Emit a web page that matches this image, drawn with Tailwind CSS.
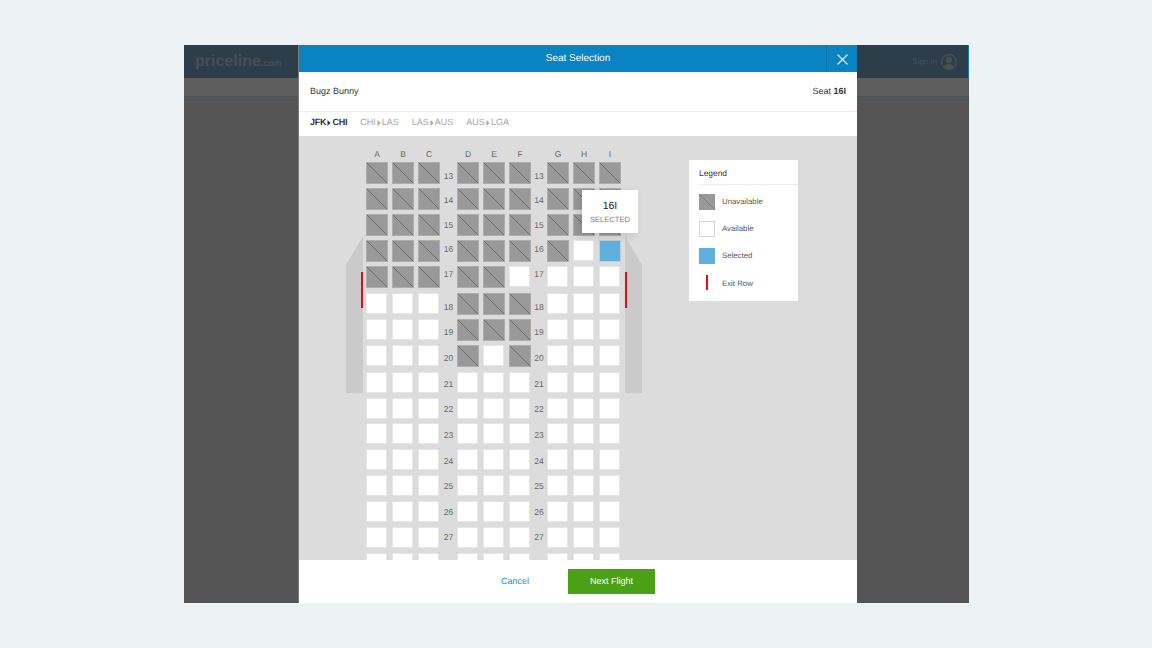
<!DOCTYPE html>
<html lang="en">

<head>
    <meta charset="UTF-8">
    <meta name="viewport" content="width=device-width, initial-scale=1.0">
    <title>Seat Selection</title>
    <script src="https://cdn.jsdelivr.net/npm/@tailwindcss/browser@4"></script>
</head>

<body class="bg-[#edf2f5] font-['Liberation_Sans',Arial,sans-serif] [text-rendering:geometricPrecision] overflow-hidden">
    <div class="w-[1152px] h-[648px] pt-[45px] pl-[184px]">
        <!-- page behind the overlay -->
        <div class="relative w-[785px] h-[558px] bg-[#555555] flex flex-col">
            <div class="h-[33px] bg-[#2d3e4a] border-r border-[#0a83c3] flex justify-between items-center pl-[11px] pr-[11px]">
                <div class="text-[#484e53] font-bold text-[16px]">priceline<span class="text-[9px]">.com</span></div>
                <div class="flex items-center gap-[4px] text-[#44525c] text-[8px]">
                    <span>Sign In</span>
                    <svg class="w-[16px] h-[16px]" viewBox="0 0 16 16">
                        <circle cx="8" cy="8" r="7.4" fill="none" stroke="#4a565f" />
                        <circle cx="8" cy="6" r="3.2" fill="#4a4f53" />
                        <path d="M3 13.5c.5-3 3-3.5 5-3.5s4.500.5 5 3.500a7 7 0 0 1-10 0z" fill="#4a4f53" />
                    </svg>
                </div>
            </div>
            <div class="h-[19px] bg-[#5e5e5e] border-b border-[#43525b]"></div>

            <!-- modal -->
            <div class="absolute left-[114px] top-0 w-[559px] h-[558px] bg-white flex flex-col border-l border-[#7a7a7a]">
                <div class="h-[27px] shrink-0 bg-[#0a83c3] relative flex items-center justify-center text-white text-[10px]">
                    Seat Selection
                    <div class="absolute right-0 top-0 w-[31px] h-[27px] border-l border-[#0875ae] flex items-center justify-center">
                        <svg class="w-[11px] h-[11px] mt-[1px]" viewBox="0 0 11 11">
                            <path d="M.6.6l9.800 9.800M10.400.6L.6 10.400" stroke="#fff" stroke-width="1.300" fill="none" />
                        </svg>
                    </div>
                </div>
                <div class="h-[40px] shrink-0 border-b border-[#eeeeee] flex justify-between items-center pl-[11px] pr-[11px] text-[9px] text-[#333333]">
                    <span>Bugz Bunny</span>
                    <span>Seat <b>16I</b></span>
                </div>
                <div class="h-[24px] shrink-0 flex items-center gap-[13px] pl-[11px] pb-[3px] text-[9px] text-[#a5a5a5]">
                    <span class="flex items-center font-bold text-[#333333] tracking-[-0.2px]">JFK<svg class="w-[4px] h-[6px] mx-[1px]" viewBox="0 0 4 6"><path d="M.5 0l3 3-3 3z" fill="#333" /></svg>CHI</span>
                    <span class="flex items-center">CHI<svg class="w-[4px] h-[6px] mx-[1px]" viewBox="0 0 4 6"><path d="M.5 0l3 3-3 3z" fill="#a5a5a5" /></svg>LAS</span>
                    <span class="flex items-center">LAS<svg class="w-[4px] h-[6px] mx-[1px]" viewBox="0 0 4 6"><path d="M.5 0l3 3-3 3z" fill="#a5a5a5" /></svg>AUS</span>
                    <span class="flex items-center">AUS<svg class="w-[4px] h-[6px] mx-[1px]" viewBox="0 0 4 6"><path d="M.5 0l3 3-3 3z" fill="#a5a5a5" /></svg>LGA</span>
                </div>

                <!-- seat area -->
                <div class="relative h-[424px] shrink-0 bg-[#dcdcdc] overflow-hidden flex items-start pl-[67px] pt-[13px]">
                    <svg class="absolute left-[47px] top-[100px] w-[18px] h-[157px]" viewBox="0 0 18 157">
                        <path d="M0 29L17 0v157H0z" fill="#cacaca" />
                    </svg>
                    <svg class="absolute left-[325px] top-[100px] w-[18px] h-[157px]" viewBox="0 0 18 157">
                        <path d="M18 29L1 0v157h17z" fill="#cacaca" />
                    </svg>
                    <div class="absolute left-[62px] top-[136px] w-[2px] h-[36px] bg-[#dd1010]"></div>
                    <div class="absolute left-[326px] top-[136px] w-[2px] h-[36px] bg-[#dd1010]"></div>

                    <div id="seatMap" class="relative flex flex-col w-[256px]">
                        <div class="flex h-[13px] text-[8.500px] leading-[11px] text-[#666666] text-center">
                            <span class="w-[22px] mr-[4px]">A</span><span class="w-[22px] mr-[4px]">B</span><span class="w-[22px]">C</span>
                            <span class="w-[17px]"></span>
                            <span class="w-[22px] mr-[4px]">D</span><span class="w-[22px] mr-[4px]">E</span><span class="w-[22px]">F</span>
                            <span class="w-[16px]"></span>
                            <span class="w-[22px] mr-[4px]">G</span><span class="w-[22px] mr-[4px]">H</span><span class="w-[22px]">I</span>
                        </div>
                    </div>

                    <div class="absolute left-[283px] top-[54px] w-[56px] h-[43px] bg-white shadow-[-3px_3px_8px_rgba(0,0,0,0.12)] flex flex-col items-center justify-center text-center">
                        <span class="text-[10.500px] leading-[14px] mt-[1px] text-[#222222]">16I</span>
                        <span class="text-[7.600px] leading-[12px] mt-[1px] text-[#777777]">SELECTED</span>
                    </div>

                    <div class="absolute left-[390px] top-[24px] w-[109px] h-[141px] bg-white text-[7.800px] text-[#555555] flex flex-col">
                        <div class="h-[25px] ml-[10px] pt-[3px] border-b border-[#eeeeee] flex items-center text-[8.400px] text-[#333333]">Legend</div>
                        <div class="flex flex-col gap-[11px] pl-[10px] pt-[9px]">
                            <div class="flex items-center gap-[7px] h-[16px]">
                                <span class="w-[16px] h-[16px] bg-[#999999]">
                                    <svg class="w-full h-full" viewBox="0 0 16 16"><path d="M0 0l16 16" stroke="#777" stroke-width=".8" /></svg>
                                </span>Unavailable
                            </div>
                            <div class="flex items-center gap-[7px] h-[16px]">
                                <span class="w-[16px] h-[16px] bg-white border border-[#d5d5d5]"></span>Available
                            </div>
                            <div class="flex items-center gap-[7px] h-[16px]">
                                <span class="w-[16px] h-[16px] bg-[#5fb0dc]"></span>Selected
                            </div>
                            <div class="flex items-center gap-[7px] h-[16px]">
                                <span class="w-[16px] h-[16px] flex justify-center"><span class="w-[2px] h-[15px] bg-[#dd1010]"></span></span><span class="mt-[1px]">Exit Row</span>
                            </div>
                        </div>
                    </div>
                </div>

                <!-- footer -->
                <div class="flex-1 relative flex items-center pl-[202px] gap-[39px] bg-white text-[9px]">
                    <a href="#" class="text-[#1a90cc]">Cancel</a>
                    <button class="w-[87px] h-[25px] bg-[#4aa116] text-white text-[9px]">Next Flight</button>
                </div>
            </div>
        </div>
    </div>

    <script>
        const seatMap = document.getElementById("seatMap")

        // rows 13..28, letters unavailable on each row
        const taken = {
            13: "ABCDEFGHI",
            14: "ABCDEFGHI",
            15: "ABCDEFGHI",
            16: "ABCDEFG",
            17: "ABCDE",
            18: "DEF",
            19: "DEF",
            20: "DF",
        }
        const tops = [162, 188, 214, 240, 266, 293, 319, 345, 372, 398, 423, 449, 475, 501, 527, 553]
        // row numbers don't sit on the seat centres, they have their own pitch
        const labelCentres = [176, 200, 225, 249, 274, 307, 332, 358, 384, 409, 435, 461, 486, 512, 537, 563]

        const makeSeat = (row, col) => {
            const seat = document.createElement("span")
            if ((taken[row] || "").includes(col)) {
                seat.className = "block w-[22px] h-[22px] bg-[#999999] border border-[#adadad]"
                seat.innerHTML = '<svg class="block w-full h-full" viewBox="0 0 20 20"><path d="M0 0l20 20" stroke="#666666" stroke-width=".9" /></svg>'
            } else if (row == 16 && col == "I") {
                seat.className = "block w-[22px] h-[22px] bg-[#5fb0dc] border border-[#b9cfdc]"
            } else {
                seat.className = "block w-[21px] h-[21px] mr-[1px] bg-white border border-[#e6e6e6] rounded-[1px]"
            }
            return seat
        }

        const addGroup = (rowEl, row, cols) => {
            const group = document.createElement("div")
            group.className = "flex gap-[4px]"
            for (const col of cols) group.appendChild(makeSeat(row, col))
            rowEl.appendChild(group)
        }

        const addLabel = (rowEl, row, width, offset) => {
            const label = document.createElement("span")
            label.className = "flex items-center justify-center text-[8.500px] text-[#666666] h-[22px] " + width
            label.style.marginTop = offset + "px"
            label.textContent = row
            rowEl.appendChild(label)
        }

        tops.forEach((top, i) => {
            const row = 13 + i
            const offset = labelCentres[i] - (top + 11)
            const rowEl = document.createElement("div")
            rowEl.className = "flex h-[22px]"
            rowEl.style.marginTop = i == 0 ? "0px" : (top - tops[i - 1] - 22) + "px"
            addGroup(rowEl, row, "ABC")
            addLabel(rowEl, row, "w-[17px]", offset)
            addGroup(rowEl, row, "DEF")
            addLabel(rowEl, row, "w-[16px]", offset)
            addGroup(rowEl, row, "GHI")
            seatMap.appendChild(rowEl)
        })
    </script>
</body>

</html>
